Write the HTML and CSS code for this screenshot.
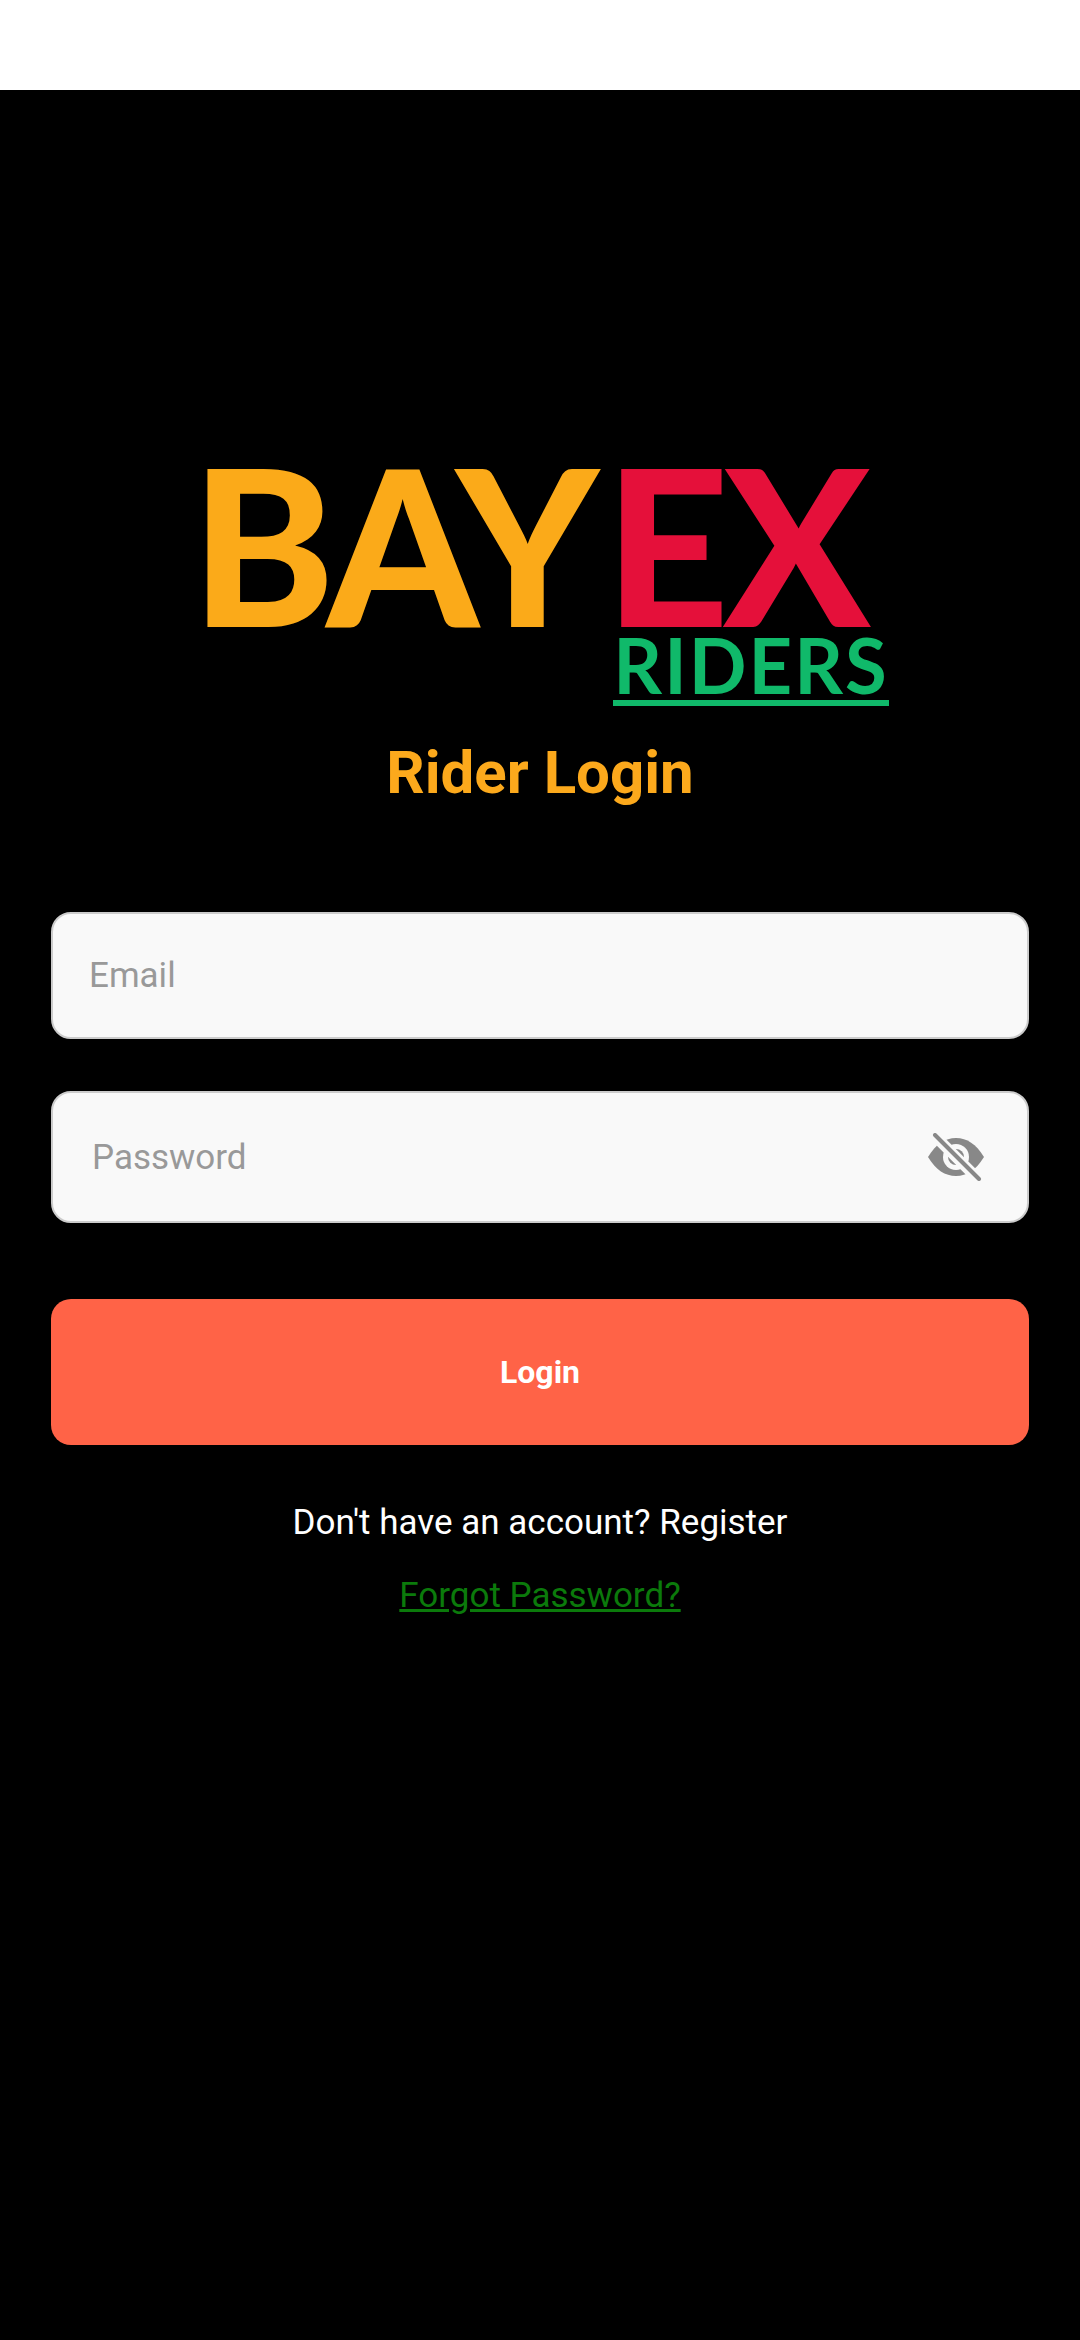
FILE: index.html
```html
<!DOCTYPE html>
<html lang="en">
<head>
  <meta charset="UTF-8" />
  <meta name="viewport" content="width=device-width, initial-scale=1.0"/>
  <title>Rider Login</title>
  <link rel="stylesheet" href="styles.css">
</head>
<body>
  <div class="status-bar"></div>

  <main class="screen">
    <div class="logo">
      <div class="logo-main"><span class="logo-bay">BAY</span><span class="logo-ex">EX</span></div>
      <div class="logo-sub">RIDERS</div>
    </div>

    <h1 class="title">Rider Login</h1>

    <div class="field field-email">
      <input type="text" placeholder="Email" />
    </div>
    <div class="field field-password">
      <input type="password" placeholder="Password" />
      <svg class="eye" viewBox="0 0 60 48" width="60" height="48">
        <path class="eye-body" d="M2 24C10 11 19 5 30 5C41 5 50 11 58 24C50 37 41 43 30 43C19 43 10 37 2 24Z"/>
        <circle class="eye-ring" cx="30" cy="24" r="13"/>
        <circle class="eye-body" cx="30" cy="24" r="8"/>
        <line class="eye-gap" x1="7" y1="1" x2="53" y2="47"/>
        <line class="eye-slash" x1="9" y1="2" x2="53" y2="46"/>
      </svg>
    </div>

    <button class="login-btn">Login</button>

    <p class="register">Don't have an account? Register</p>
    <a class="forgot" href="#">Forgot Password?</a>
  </main>
</body>
</html>
```

FILE: styles.css
```css
* { box-sizing: border-box; }
html, body { height: 100%; }
body {
  margin: 0;
  display: flex; flex-direction: column;
  font-family: Roboto, "Liberation Sans", sans-serif;
  background-color: #fff;
}
.status-bar { height: 90px; background-color: #fff; }
.screen {
  flex: 1;
  display: flex; flex-direction: column; align-items: center;
  background-color: #000;
  padding: 374px 51px 0;
}

/* logo */
.logo {
  display: flex; flex-direction: column; align-items: flex-end;
  width: 683px;
  margin-left: 15px;
}
.logo-main {
  width: 100%;
  font-family: Lato, sans-serif;
  font-weight: 900;
  font-size: 217px;
  line-height: 158px;
  letter-spacing: -6px;
  text-indent: -15px;
  white-space: nowrap;
}
.logo-bay { color: #fbaa19; margin-right: 12px; }
.logo-ex { color: #e5103a; }
.logo-sub {
  width: 276px;
  margin-top: 14px;
  padding-bottom: 6px;
  border-bottom: 6px solid #10b96a;
  color: #10b96a;
  font-family: Lato, sans-serif;
  font-weight: 700;
  font-size: 76px;
  line-height: 58px;
  letter-spacing: 2px;
  text-align: center;
  white-space: nowrap;
}

.title {
  margin: 33px 0 0;
  color: #fca91c;
  font-size: 60px;
  font-weight: 700;
  line-height: 68px;
}

/* inputs */
.field {
  display: flex; align-items: center;
  width: 100%;
  background-color: #f9f9f9;
  border: 2px solid #ccc;
  border-radius: 20px;
}
.field input {
  flex: 1;
  min-width: 0;
  border: none; outline: none;
  background: transparent;
  font-family: inherit;
  font-size: 35px;
  color: #333;
}
.field input::placeholder { color: #999; opacity: 1; }
.field-email {
  height: 127px;
  margin-top: 105px;
  padding-left: 34px;
}
.field-password {
  height: 132px;
  margin-top: 52px;
  padding: 0 41px 0 37px;
}
.eye { flex-shrink: 0; }
.eye-body { fill: #888; }
.eye-ring { fill: #f9f9f9; }
.eye-gap { stroke: #f9f9f9; stroke-width: 11; }
.eye-slash { stroke: #888; stroke-width: 4; stroke-linecap: round; }

.login-btn {
  width: 100%;
  height: 146px;
  margin-top: 76px;
  border: none;
  border-radius: 20px;
  background-color: #ff6347;
  color: #fff;
  font-family: inherit;
  font-size: 32px;
  font-weight: 700;
}

.register {
  margin: 57px 0 0;
  color: #fff;
  font-size: 35px;
  line-height: 42px;
}
.forgot {
  margin-top: 31px;
  color: #0b7a0b;
  font-size: 35px;
  line-height: 42px;
  text-decoration: underline;
}
```
